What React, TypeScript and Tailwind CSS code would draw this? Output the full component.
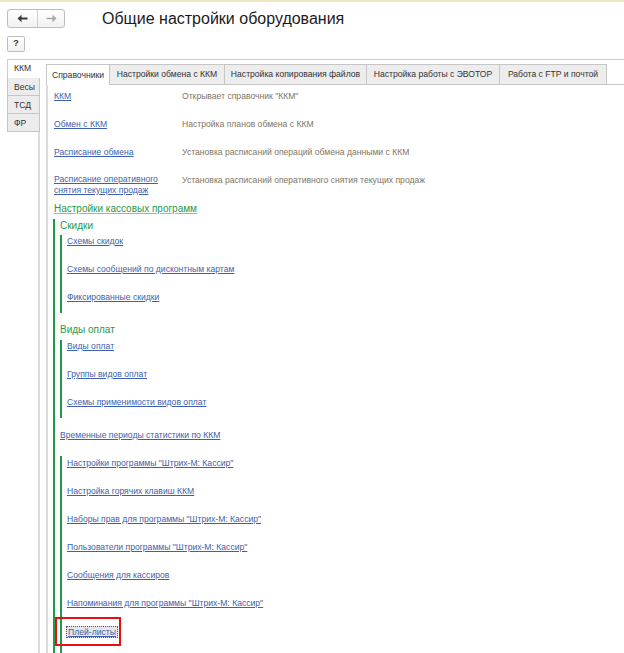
import React from "react";

const link = "text-[#3d5fae] underline decoration-[#3d5fae] underline-offset-[1px]";

const topRows = [
  { label: ["ККМ"], desc: 'Открывает справочник "ККМ"' },
  { label: ["Обмен с ККМ"], desc: "Настройка планов обмена с ККМ" },
  { label: ["Расписание обмена"], desc: "Установка расписаний операций обмена данными с ККМ" },
  {
    label: ["Расписание оперативного", "снятия текущих продаж"],
    desc: "Установка расписаний оперативного снятия текущих продаж",
  },
];

const topTabs = [
  { label: "Справочники", w: "w-[64px]", active: true },
  { label: "Настройки обмена с ККМ", w: "w-[115px]" },
  { label: "Настройка копирования файлов", w: "w-[142px]" },
  { label: "Настройка работы с ЭВОТОР", w: "w-[133px]" },
  { label: "Работа с FTP и почтой", w: "w-[107px]" },
];

const sideTabs = ["Весы", "ТСД", "ФР"];

const discounts = ["Схемы скидок", "Схемы сообщений по дисконтным картам", "Фиксированные скидки"];
const payments = ["Виды оплат", "Группы видов оплат", "Схемы применимости видов оплат"];
const cashier = [
  'Настройки программы "Штрих-М: Кассир"',
  "Настройка горячих клавиш ККМ",
  'Наборы прав для программы "Штрих-М: Кассир"',
  'Пользователи программы "Штрих-М: Кассир"',
  "Сообщения для кассиров",
  'Напоминания для программы "Штрих-М: Кассир"',
];

function ArrowLeft({ color }: { color: string }) {
  return (
    <svg width="11" height="9" viewBox="0 0 11 9">
      <path d="M0.5 4.5 L4.5 0.8 L4.5 3.4 L10.5 3.4 L10.5 5.6 L4.5 5.6 L4.5 8.2 Z" fill={color} />
    </svg>
  );
}

function ArrowRight({ color }: { color: string }) {
  return (
    <svg width="11" height="9" viewBox="0 0 11 9">
      <path d="M10.5 4.5 L6.5 0.8 L6.5 3.8 L0.5 3.8 L0.5 5.2 L6.5 5.2 L6.5 8.2 Z" fill={color} />
    </svg>
  );
}

function LinkList({ items }: { items: string[] }) {
  return (
    <div className="flex flex-col gap-[16px]">
      {items.map((item) => (
        <div key={item} className="h-[12px] leading-[12px]">
          <span className={link}>{item}</span>
        </div>
      ))}
    </div>
  );
}

export default function App() {
  return (
    <div
      className="flex h-[653px] w-[624px] flex-col overflow-hidden border-t-2 border-[#efe7bf] bg-white text-[8.6px] text-[#333]"
      style={{ fontFamily: '"Liberation Sans", Arial, sans-serif' }}
    >
      {/* header */}
      <div className="flex items-center pl-[7px] pt-[7px]">
        <div className="flex h-[19px] w-[58px] rounded-[3px] border border-[#bcbcbc] bg-gradient-to-b from-white to-[#f1f1f1]">
          <div className="flex w-[30px] items-center justify-center border-r border-[#cfcfcf]">
            <ArrowLeft color="#3a3a3a" />
          </div>
          <div className="flex flex-1 items-center justify-center">
            <ArrowRight color="#a8a8a8" />
          </div>
        </div>
        <h1 className="ml-[37px] text-[16px] leading-[19px] text-[#1b1b1b]">Общие настройки оборудования</h1>
      </div>

      <div className="ml-[7px] mt-[8px] flex h-[16px] w-[18px] items-center justify-center rounded-[2px] border border-[#bcbcbc] bg-gradient-to-b from-white to-[#f1f1f1] text-[9px] font-bold text-[#333]">
        ?
      </div>

      {/* main */}
      <div className="ml-[7px] mt-[7px] flex flex-1 border-t border-[#cdcdcd]">
        {/* side tabs */}
        <div className="flex w-[33px] flex-col">
          <div className="h-[18px] border-l border-[#cdcdcd] bg-white pl-[6px] pt-[3px] leading-[10px]">ККМ</div>
          {sideTabs.map((t) => (
            <div
              key={t}
              className="h-[18px] border border-t-0 border-[#c6c6c6] bg-[#ececec] pl-[6px] pt-[4px] leading-[10px] first:border-t"
            >
              {t}
            </div>
          ))}
          <div className="flex-1 border-r-2 border-[#dcdcdc]" />
        </div>

        <div className="w-[6px]" />

        {/* content panel */}
        <div className="flex flex-1 flex-col">
          <div className="mt-[4px] flex border-b border-[#c6c6c6]">
            {topTabs.map((t) => (
              <div
                key={t.label}
                className={
                  t.active
                    ? `${t.w} -mb-px flex h-[21px] items-center justify-center border border-b-0 border-[#c6c6c6] bg-white`
                    : `${t.w} flex h-[20px] items-center justify-center border border-l-0 border-[#c6c6c6] border-b-0 bg-[#ededed]`
                }
              >
                {t.label}
              </div>
            ))}
          </div>

          <div className="flex flex-1 flex-col border-l-2 border-[#dcdcdc] pl-[6px] pt-[5px]">
            {topRows.map((r) => (
              <div key={r.desc} className="flex h-[28px]">
                <div className={`w-[128px] ${r.label.length > 1 ? "leading-[11px]" : "leading-[12px]"}`}>
                  {r.label.map((l) => (
                    <div key={l}>
                      <span className={link}>{l}</span>
                    </div>
                  ))}
                </div>
                <div className="leading-[12px] text-[#807566]">{r.desc}</div>
              </div>
            ))}

            <div className="h-[14px] text-[10px] leading-[14px]">
              <span className="text-[#27994c] underline decoration-[#74cf98]">Настройки кассовых программ</span>
            </div>

            {/* cash programs group */}
            <div className="relative -ml-[1px] mt-[3px] flex flex-1 flex-col border-l-2 border-[#1f9a4b] pl-[5px]">
              <div className="h-[14px] text-[10px] leading-[14px] text-[#27994c]">Скидки</div>
              <div className="mt-[2px] border-l-2 border-[#1f9a4b] pb-[10px] pl-[5px]">
                <LinkList items={discounts} />
              </div>

              <div className="mt-[10px] h-[14px] text-[10px] leading-[14px] text-[#27994c]">Виды оплат</div>
              <div className="mt-[3px] border-l-2 border-[#1f9a4b] pb-[10px] pl-[5px]">
                <LinkList items={payments} />
              </div>

              <div className="mt-[11px] h-[12px] leading-[12px]">
                <span className={link}>Временные периоды статистики по ККМ</span>
              </div>

              <div className="mt-[15px] flex-1 border-l-2 border-[#1f9a4b] pl-[5px] pt-[1px]">
                <LinkList items={cashier} />
                <div className="relative mt-[17px] h-[12px] leading-[12px]">
                  <span className="-ml-[1px] border border-dotted border-[#555] bg-[#e6e6e6] px-[1px] text-[#3d5fae] underline">
                    Плей-листы
                  </span>
                  <div className="absolute -left-[12px] -top-[9px] h-[29px] w-[66px] border-2 border-[#e81010]" />
                </div>
              </div>
            </div>
          </div>
        </div>
      </div>
    </div>
  );
}
